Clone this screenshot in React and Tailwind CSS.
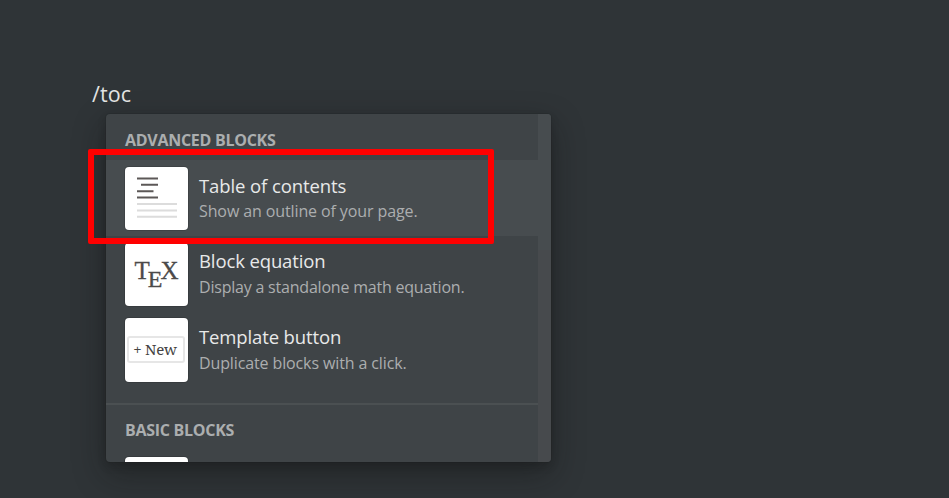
function OutlineIcon() {
  return (
    <svg viewBox="0 0 63 63" className="h-[63px] w-[63px]" aria-hidden="true">
      <g stroke="#5c5857" strokeWidth="2">
        <path d="M12 11.5h21M16 17.8h17M12 24.3h16.5M12 30.5h21" />
      </g>
      <g stroke="#dcdcdc" strokeWidth="2">
        <path d="M12 37h40M12 43.5h40M12 49.7h40" />
      </g>
    </svg>
  );
}

function TexIcon() {
  return (
    <div className="flex h-[63px] w-[63px] justify-center pt-[12px] font-['Liberation_Serif',serif] text-[25px] leading-[31px] text-[#4c4a4a] [-webkit-text-stroke:0.3px_#4c4a4a]">
      <span className="-mr-[2px]">T</span>
      <span className="mt-[9px] text-[24px]">E</span>
      <span className="-ml-[2px]">X</span>
    </div>
  );
}

function NewIcon() {
  return (
    <div className="flex h-[64px] w-[63px] items-start pt-[18px] pl-[2px]">
      <div className="flex h-[27px] w-[58px] shrink-0 items-center justify-center rounded-[3px] border-2 border-[#e6e6e6] pr-[2px] font-['Noto_Serif','DejaVu_Serif','Liberation_Serif',serif] text-[15px] leading-none tracking-[-0.2px] whitespace-nowrap text-[#454343]">
        + New
      </div>
    </div>
  );
}

function Row({ icon, title, text, active, rowClass, titleClass, textClass }) {
  return (
    <div className={`flex shrink-0 items-start pl-[19px] ${rowClass} ${active ? "bg-[#474c4f]" : ""}`}>
      <div className="min-h-[63px] w-[63px] shrink-0 overflow-hidden rounded-[4px] bg-white shadow-[0_0_0_1px_rgba(15,15,15,0.15)]">
        {icon}
      </div>
      <div className="ml-[11px] pt-[6px] whitespace-nowrap">
        <div className={`text-[18.5px] leading-[25px] text-[#e8e9e9] ${titleClass}`}>{title}</div>
        <div className={`text-[16px] text-[#acaeaf] ${textClass}`}>{text}</div>
      </div>
    </div>
  );
}

export default function App() {
  return (
    <div className="relative h-[498px] w-[949px] overflow-hidden bg-[#2f3437] pt-[79px] font-['Open_Sans','Noto_Sans',sans-serif]">
      <div className="h-[35px] pl-[92px] text-[21.5px] leading-[30px] tracking-[0.1px] text-[#e2e3e3]">/toc</div>
      <div className="ml-[106px] flex h-[348px] w-[445px] overflow-hidden rounded-[4px] bg-[#3f4447] shadow-[0_0_0_1px_rgba(15,15,15,0.1),0_4px_8px_rgba(15,15,15,0.2),0_12px_32px_rgba(15,15,15,0.4)]">
        <div className="flex w-[432px] flex-col overflow-hidden">
          <div className="h-[46px] shrink-0 pt-[13px] pl-[19px] text-[16px] leading-[26px] font-bold tracking-[-0.28px] whitespace-nowrap text-[#abaeaf]">
            ADVANCED BLOCKS
          </div>
          <Row active icon={<OutlineIcon />} title="Table of contents" text="Show an outline of your page." rowClass="h-[76px] pt-[7px]" titleClass="tracking-[-0.1px]" textClass="leading-[26px] tracking-[-0.11px]" />
          <Row icon={<TexIcon />} title="Block equation" text="Display a standalone math equation." rowClass="h-[75px] pt-[7px]" titleClass="-mt-px tracking-[-0.12px]" textClass="leading-[28px] tracking-[-0.21px]" />
          <Row icon={<NewIcon />} title="Template button" text="Duplicate blocks with a click." rowClass="h-[76px] pt-[7px]" titleClass="tracking-[-0.13px]" textClass="leading-[28px] tracking-[-0.12px]" />
          <div className="mt-[16px] h-[2px] shrink-0 bg-[#4b5052]" />
          <div className="h-[52px] shrink-0 pt-[12px] pl-[19px] text-[16px] leading-[26px] font-bold tracking-[-0.28px] whitespace-nowrap text-[#abaeaf]">
            BASIC BLOCKS
          </div>
          <div className="ml-[19px] h-[63px] w-[63px] shrink-0 rounded-[4px] bg-white shadow-[0_0_0_1px_rgba(15,15,15,0.15)]" />
        </div>
        <div className="w-[13px] bg-[#474a4d]">
          <div className="h-[136px] bg-[#474c4f]" />
        </div>
      </div>
      <div className="absolute top-[149px] left-[88px] h-[95px] w-[406px] rounded-[2px] border-[6px] border-[#ff0000]" />
    </div>
  );
}
